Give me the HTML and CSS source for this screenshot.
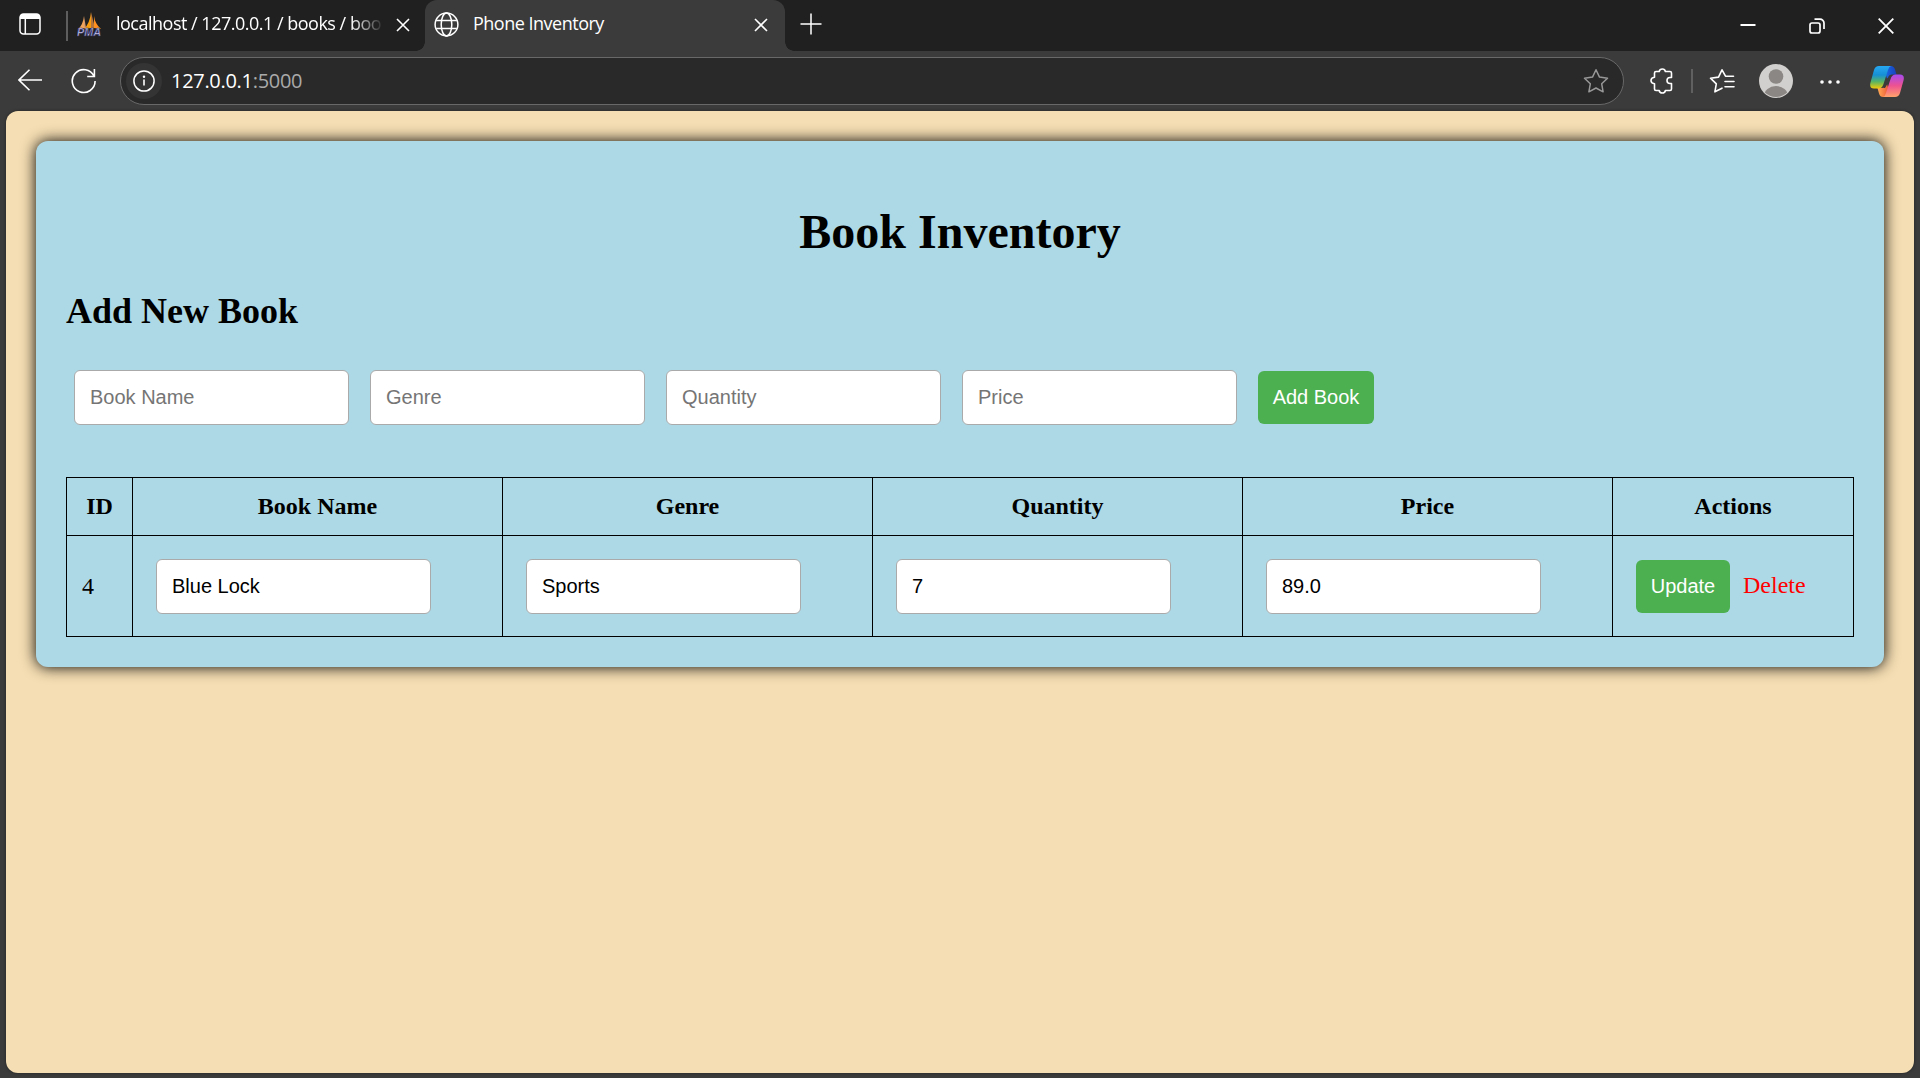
FILE: index.html
```html
<!DOCTYPE html>
<html lang="en">
<head>
<meta charset="utf-8">
<title>Phone Inventory</title>
<link rel="stylesheet" href="styles.css">
</head>
<body>
<div class="browser">
  <header class="tabstrip">
    <svg class="tab-actions" width="22" height="22" viewBox="0 0 22 22"><rect x="1" y="1" width="20" height="20" rx="3.5" fill="none" stroke="#fff" stroke-width="1.5"/><path d="M1 6V4a3 3 0 0 1 3-3h14a3 3 0 0 1 3 3v2z" fill="#fff"/><path d="M6.3 6v15" stroke="#fff" stroke-width="1.5"/></svg>
    <span class="strip-divider"></span>
    <div class="tab tab-idle">
      <svg class="favicon" width="25" height="25" viewBox="0 0 25 25">
        <path d="M7 4Q6 13 1 17l6-1z" fill="#f2a45b"/><path d="M14 0Q13 11 7 17l7-1z" fill="#f89c0e"/><path d="M14 0l4 16h-4z" fill="#b8763a"/><path d="M17 4q1 8 7 13l-7-1z" fill="#ff9020"/><path d="M7 4l2 12H7z" fill="#d99a6b"/>
        <text x="0" y="24" textLength="24" lengthAdjust="spacingAndGlyphs" class="favicon-label">PMA</text>
      </svg>
      <span class="tab-title title-faded">localhost / 127.0.0.1 / books / boo</span>
      <svg class="tab-close" width="14" height="14" viewBox="0 0 14 14"><path d="M1 1l12 12M13 1L1 13" stroke="#fff" stroke-width="1.6"/></svg>
    </div>
    <div class="tab tab-active">
      <svg width="25" height="25" viewBox="0 0 25 25" fill="none" stroke="#fff" stroke-width="1.5"><circle cx="12.5" cy="12.5" r="11.4"/><ellipse cx="12.5" cy="12.5" rx="5.3" ry="11.4"/><path d="M2.2 8.5h20.6M2.2 16.5h20.6"/></svg>
      <span class="tab-title">Phone Inventory</span>
      <svg class="tab-close" width="14" height="14" viewBox="0 0 14 14"><path d="M1 1l12 12M13 1L1 13" stroke="#fff" stroke-width="1.6"/></svg>
    </div>
    <svg class="new-tab" width="22" height="22" viewBox="0 0 22 22"><path d="M11 .5v21M.5 11h21" stroke="#fff" stroke-width="1.5"/></svg>
    <div class="window-controls">
      <svg width="16" height="16" viewBox="0 0 16 16"><path d="M.5 8h15" stroke="#fff" stroke-width="2"/></svg>
      <svg width="16" height="16" viewBox="0 0 16 16" fill="none" stroke="#fff" stroke-width="1.7"><rect x="1" y="5" width="10" height="10" rx="2"/><path d="M5.5 1.2H11a4 4 0 0 1 4 4V11"/></svg>
      <svg width="16" height="16" viewBox="0 0 16 16"><path d="M.7.7l14.6 14.6M15.3.7L.7 15.3" stroke="#fff" stroke-width="1.8"/></svg>
    </div>
  </header>
  <nav class="toolbar">
    <svg class="back" width="25" height="22" viewBox="0 0 25 22" fill="none" stroke="#fff" stroke-width="1.6"><path d="M24 11H1M11.500 .8L1 11 11.500 21.2"/></svg>
    <svg class="reload" width="26" height="26" viewBox="0 0 26 26" fill="none" stroke="#fff" stroke-width="1.6"><path d="M23 8.2A11.4 11.4 0 1 0 24.1 13M23.400 1v7.500h-7.200"/></svg>
    <div class="address">
      <span class="site-info"><svg width="22" height="22" viewBox="0 0 22 22"><circle cx="11" cy="11" r="10.1" fill="none" stroke="#fff" stroke-width="1.5"/><path d="M11 9.5v6" stroke="#fff" stroke-width="1.6"/><circle cx="11" cy="6.7" r="1.2" fill="#fff"/></svg></span>
      <span class="url">127.0.0.1<span class="port">:5000</span></span>
      <svg class="favorite" width="26" height="26" viewBox="0 0 26 26" fill="none" stroke="#989898" stroke-width="1.5" stroke-linejoin="round"><path d="M13 1.8l3.5 7.3 8 1.1-5.8 5.6 1.4 8L13 20l-7.1 3.8 1.4-8-5.8-5.6 8-1.1z"/></svg>
    </div>
    <svg class="extensions" width="24" height="26" viewBox="0 0 24 26" fill="none" stroke="#fff" stroke-width="1.6" stroke-linejoin="round"><path d="M6 3.5h3.2C9.500 1.900 10.500 1 12.300 1s2.800.9 3.100 2.500H20a1.500 1.500 0 0 1 1.500 1.500v4.500h-1.500c-1.800 0-3 1.200-3 3s1.200 3 3 3h1.500V21a1.500 1.500 0 0 1-1.500 1.500h-4.600c-.3 1.600-1.300 2.500-3.100 2.500s-2.800-.9-3.100-2.500H6A1.500 1.500 0 0 1 4.500 21v-5.200C2.400 15.500 1 14.300 1 12.500s1.400-3 3.500-3.300V5A1.500 1.500 0 0 1 6 3.500z"/></svg>
    <span class="tool-divider"></span>
    <svg class="collections" width="26" height="26" viewBox="0 0 26 26" fill="none" stroke="#fff" stroke-width="1.6" stroke-linejoin="round" stroke-linecap="round"><path d="M13 20.200l-7.100 3.600 1.400-8-5.800-5.600 8-1.100L13 1.800l3.500 6.400H24.500M16 13.500h9M16 18.700h9"/></svg>
    <svg class="avatar" width="34" height="34" viewBox="0 0 34 34"><clipPath id="face"><circle cx="17" cy="17" r="16"/></clipPath><circle cx="17" cy="17" r="17" fill="#d2d0ce"/><circle cx="17" cy="12.500" r="7.300" fill="#8a8784"/><ellipse cx="17" cy="32" rx="12" ry="10" fill="#8a8784" clip-path="url(#face)"/></svg>
    <svg class="more" width="20" height="4" viewBox="0 0 20 4" fill="#fff"><circle cx="2" cy="2" r="1.800"/><circle cx="10" cy="2" r="1.800"/><circle cx="18" cy="2" r="1.800"/></svg>
    <svg class="copilot" width="34" height="31" viewBox="0 0 34 31">
      <defs>
        <linearGradient id="g1" x1="0" y1="0" x2="0" y2="1"><stop offset="0" stop-color="#27a8f2"/><stop offset=".4" stop-color="#168fd4"/><stop offset=".7" stop-color="#5ab562"/><stop offset="1" stop-color="#f2ca08"/></linearGradient>
        <linearGradient id="g2" x1="0" y1="0" x2="0" y2="1"><stop offset="0" stop-color="#a64af0"/><stop offset=".5" stop-color="#ee5290"/><stop offset="1" stop-color="#ffa36b"/></linearGradient>
        <linearGradient id="g3"><stop offset="0" stop-color="#1b71e8"/><stop offset="1" stop-color="#1740bd"/></linearGradient>
        <linearGradient id="g4"><stop offset="0" stop-color="#ffad55"/><stop offset="1" stop-color="#e84631"/></linearGradient>
      </defs>
      <path d="M13 0h8q3 0 4 3.500L26.500 8.500H22q-3 0-4 3l-1 1z" fill="url(#g3)"/>
      <path d="M21 31h-8q-3 0-4-3.500L7.500 22H12q3 0 4-3l1-1z" fill="url(#g4)"/>
      <path d="M9 0h12q-2 .5-3 4l-4.500 14q-1.500 4.500-5 4.500H4q-5 0-3.500-6L4 4q1.200-4 5-4z" fill="url(#g1)"/>
      <path d="M25 31H13q2-.5 3-4l4.500-14q1.500-4.500 5-4.500H30q5 0 3.500 6L30 27q-1.200 4-5 4z" fill="url(#g2)"/>
      <path d="M19.500 12.500h1.200L15 22h-2q1-.5 1.700-2.500l2-6q.5-1 2.800-1z" fill="#3b3b3b"/>
    </svg>
  </nav>
  <main class="page">
    <section class="container">
      <h1>Book Inventory</h1>
      <h2>Add New Book</h2>
      <form class="add-form">
        <input type="text" placeholder="Book Name">
        <input type="text" placeholder="Genre">
        <input type="text" placeholder="Quantity">
        <input type="text" placeholder="Price">
        <button type="button">Add Book</button>
      </form>
      <table>
        <colgroup><col class="col-id"><col class="col-field"><col class="col-field"><col class="col-field"><col class="col-field"><col></colgroup>
        <thead><tr><th>ID</th><th>Book Name</th><th>Genre</th><th>Quantity</th><th>Price</th><th>Actions</th></tr></thead>
        <tbody><tr>
          <td>4</td>
          <td><input type="text" value="Blue Lock"></td>
          <td><input type="text" value="Sports"></td>
          <td><input type="text" value="7"></td>
          <td><input type="text" value="89.0"></td>
          <td><div class="actions"><button type="button">Update</button><a class="delete">Delete</a></div></td>
        </tr></tbody>
      </table>
    </section>
  </main>
</div>
</body>
</html>
```
FILE: styles.css
```css
* { box-sizing: border-box; }
body { margin: 0; overflow: hidden; }
svg { display: block; flex: none; }

.browser {
  display: flex;
  flex-direction: column;
  width: 1920px;
  height: 1078px;
  background: #3b3b3b;
}

/* Tab strip */
.tabstrip {
  display: flex;
  flex: none;
  height: 51px;
  background: #202020;
  color: #fff;
  font-family: "Open Sans", "Noto Sans", sans-serif;
}
.tab-actions { margin: 13px 0 0 19px; }
.strip-divider { flex: none; width: 2px; height: 30px; margin: 11px 0 0 25px; background: #5e5e5e; }
.tab { display: flex; flex: none; }
.tab-idle { width: 357px; padding: 12px 0 0 9px; border-radius: 0 0 9px 0; }
.favicon-label { font: italic bold 10px "Liberation Sans", sans-serif; fill: #cfcff5; stroke: #35356b; stroke-width: .6px; }
.tab-title {
  flex: none;
  width: 268px;
  margin: -2px 0 0 14px;
  white-space: nowrap;
  font-size: 18px;
  line-height: 27px;
  letter-spacing: -.5px;
}
.title-faded { -webkit-mask-image: linear-gradient(to right, #000 235px, transparent 268px); mask-image: linear-gradient(to right, #000 235px, transparent 268px); }
.tab-close { margin-top: 6px; }
.tab-idle .tab-close { margin-left: 12px; }
.tab-active {
  position: relative;
  width: 360px;
  padding: 12px 0 0 9px;
  border-radius: 12px 12px 0 0;
  background: #3b3b3b;
}
.tab-active::before, .tab-active::after {
  content: "";
  position: absolute;
  bottom: 0;
  width: 9px;
  height: 9px;
}
.tab-active::before { left: -9px; background: radial-gradient(circle at 0 0, #202020 8.500px, #3b3b3b 9px); }
.tab-active::after { right: -9px; background: radial-gradient(circle at 100% 0, #202020 8.500px, #3b3b3b 9px); }
.tab-active .tab-title { width: 281px; }
.new-tab { margin: 13px 0 0 15px; }
.window-controls { display: flex; gap: 53px; margin: 18px 26px 0 auto; }
.window-controls svg:first-child { margin-top: -1px; }
.window-controls svg:last-child { margin-top: -.5px; }

/* Toolbar */
.toolbar { display: flex; flex: none; align-items: center; height: 60px; }
.back { margin: -2px 0 0 18px; }
.reload { margin-left: 28px; }
.address {
  display: flex;
  flex: none;
  align-items: center;
  width: 1504px;
  height: 48px;
  margin-left: 23px;
  padding: 0 14px 0 5px;
  border: 1.500px solid #686868;
  border-radius: 24px;
  background: #292929;
}
.site-info { display: grid; place-items: center; width: 36px; height: 36px; border-radius: 50%; background: #343434; }
.url { margin: 0 auto 0 9px; color: #fff; font: 20px/30px "Open Sans", "Noto Sans", sans-serif; letter-spacing: -.3px; }
.port { color: #aaa; }
.extensions { margin-left: 26px; }
.tool-divider { width: 2px; height: 24px; margin-left: 17px; background: #606060; }
.collections { margin-left: 16px; }
.avatar { margin-left: 24px; }
.more { margin: 1px 0 0 27px; }
.copilot { margin-left: 30px; }

/* Page */
.page {
  width: 1908px;
  height: 962px;
  margin-left: 6px;
  padding: 30px;
  border-radius: 12px;
  background: #f5deb3;
  box-shadow: 0 0 3px #222;
  color: #000;
  font: 24px/27px "Liberation Serif", "Times New Roman", serif;
}
.container {
  height: 526px;
  padding: 30px;
  border-radius: 12px;
  background: #add8e6;
  box-shadow: 0 0 15px #000;
}
h1 { margin: 33px 0 0; text-align: center; font-size: 48px; line-height: 56px; }
h2 { margin: 30px 0 0; font-size: 36px; line-height: 42px; }
.add-form { display: flex; align-items: center; gap: 21px; margin: 38px 0 0 8px; height: 55px; }
input {
  width: 275px;
  height: 55px;
  padding: 0 15px;
  border: 1px solid #aaa;
  border-radius: 6px;
  background: #fff;
  color: #000;
  font: 20px "Liberation Sans", Arial, sans-serif;
}
input::placeholder { color: #757575; opacity: 1; }
button {
  height: 53px;
  padding: 0 15px;
  border: 0;
  border-radius: 6px;
  background: #4caf50;
  color: #fff;
  font: 20px "Liberation Sans", Arial, sans-serif;
  white-space: nowrap;
}
.add-form button { width: 116px; padding: 0; }
table { width: 1788px; margin-top: 52px; border-collapse: collapse; table-layout: fixed; }
.col-id { width: 66px; }
.col-field { width: 370px; }
th, td { padding: 0 15px; border: 1px solid #000; }
th { height: 58px; text-align: center; }
td { height: 101px; text-align: left; }
td input { display: block; margin-left: 8px; }
.actions { display: flex; align-items: center; gap: 13px; padding-left: 8px; }
.actions button { width: 94px; padding: 0; }
.delete { margin-top: -2px; color: #f00; }
```
